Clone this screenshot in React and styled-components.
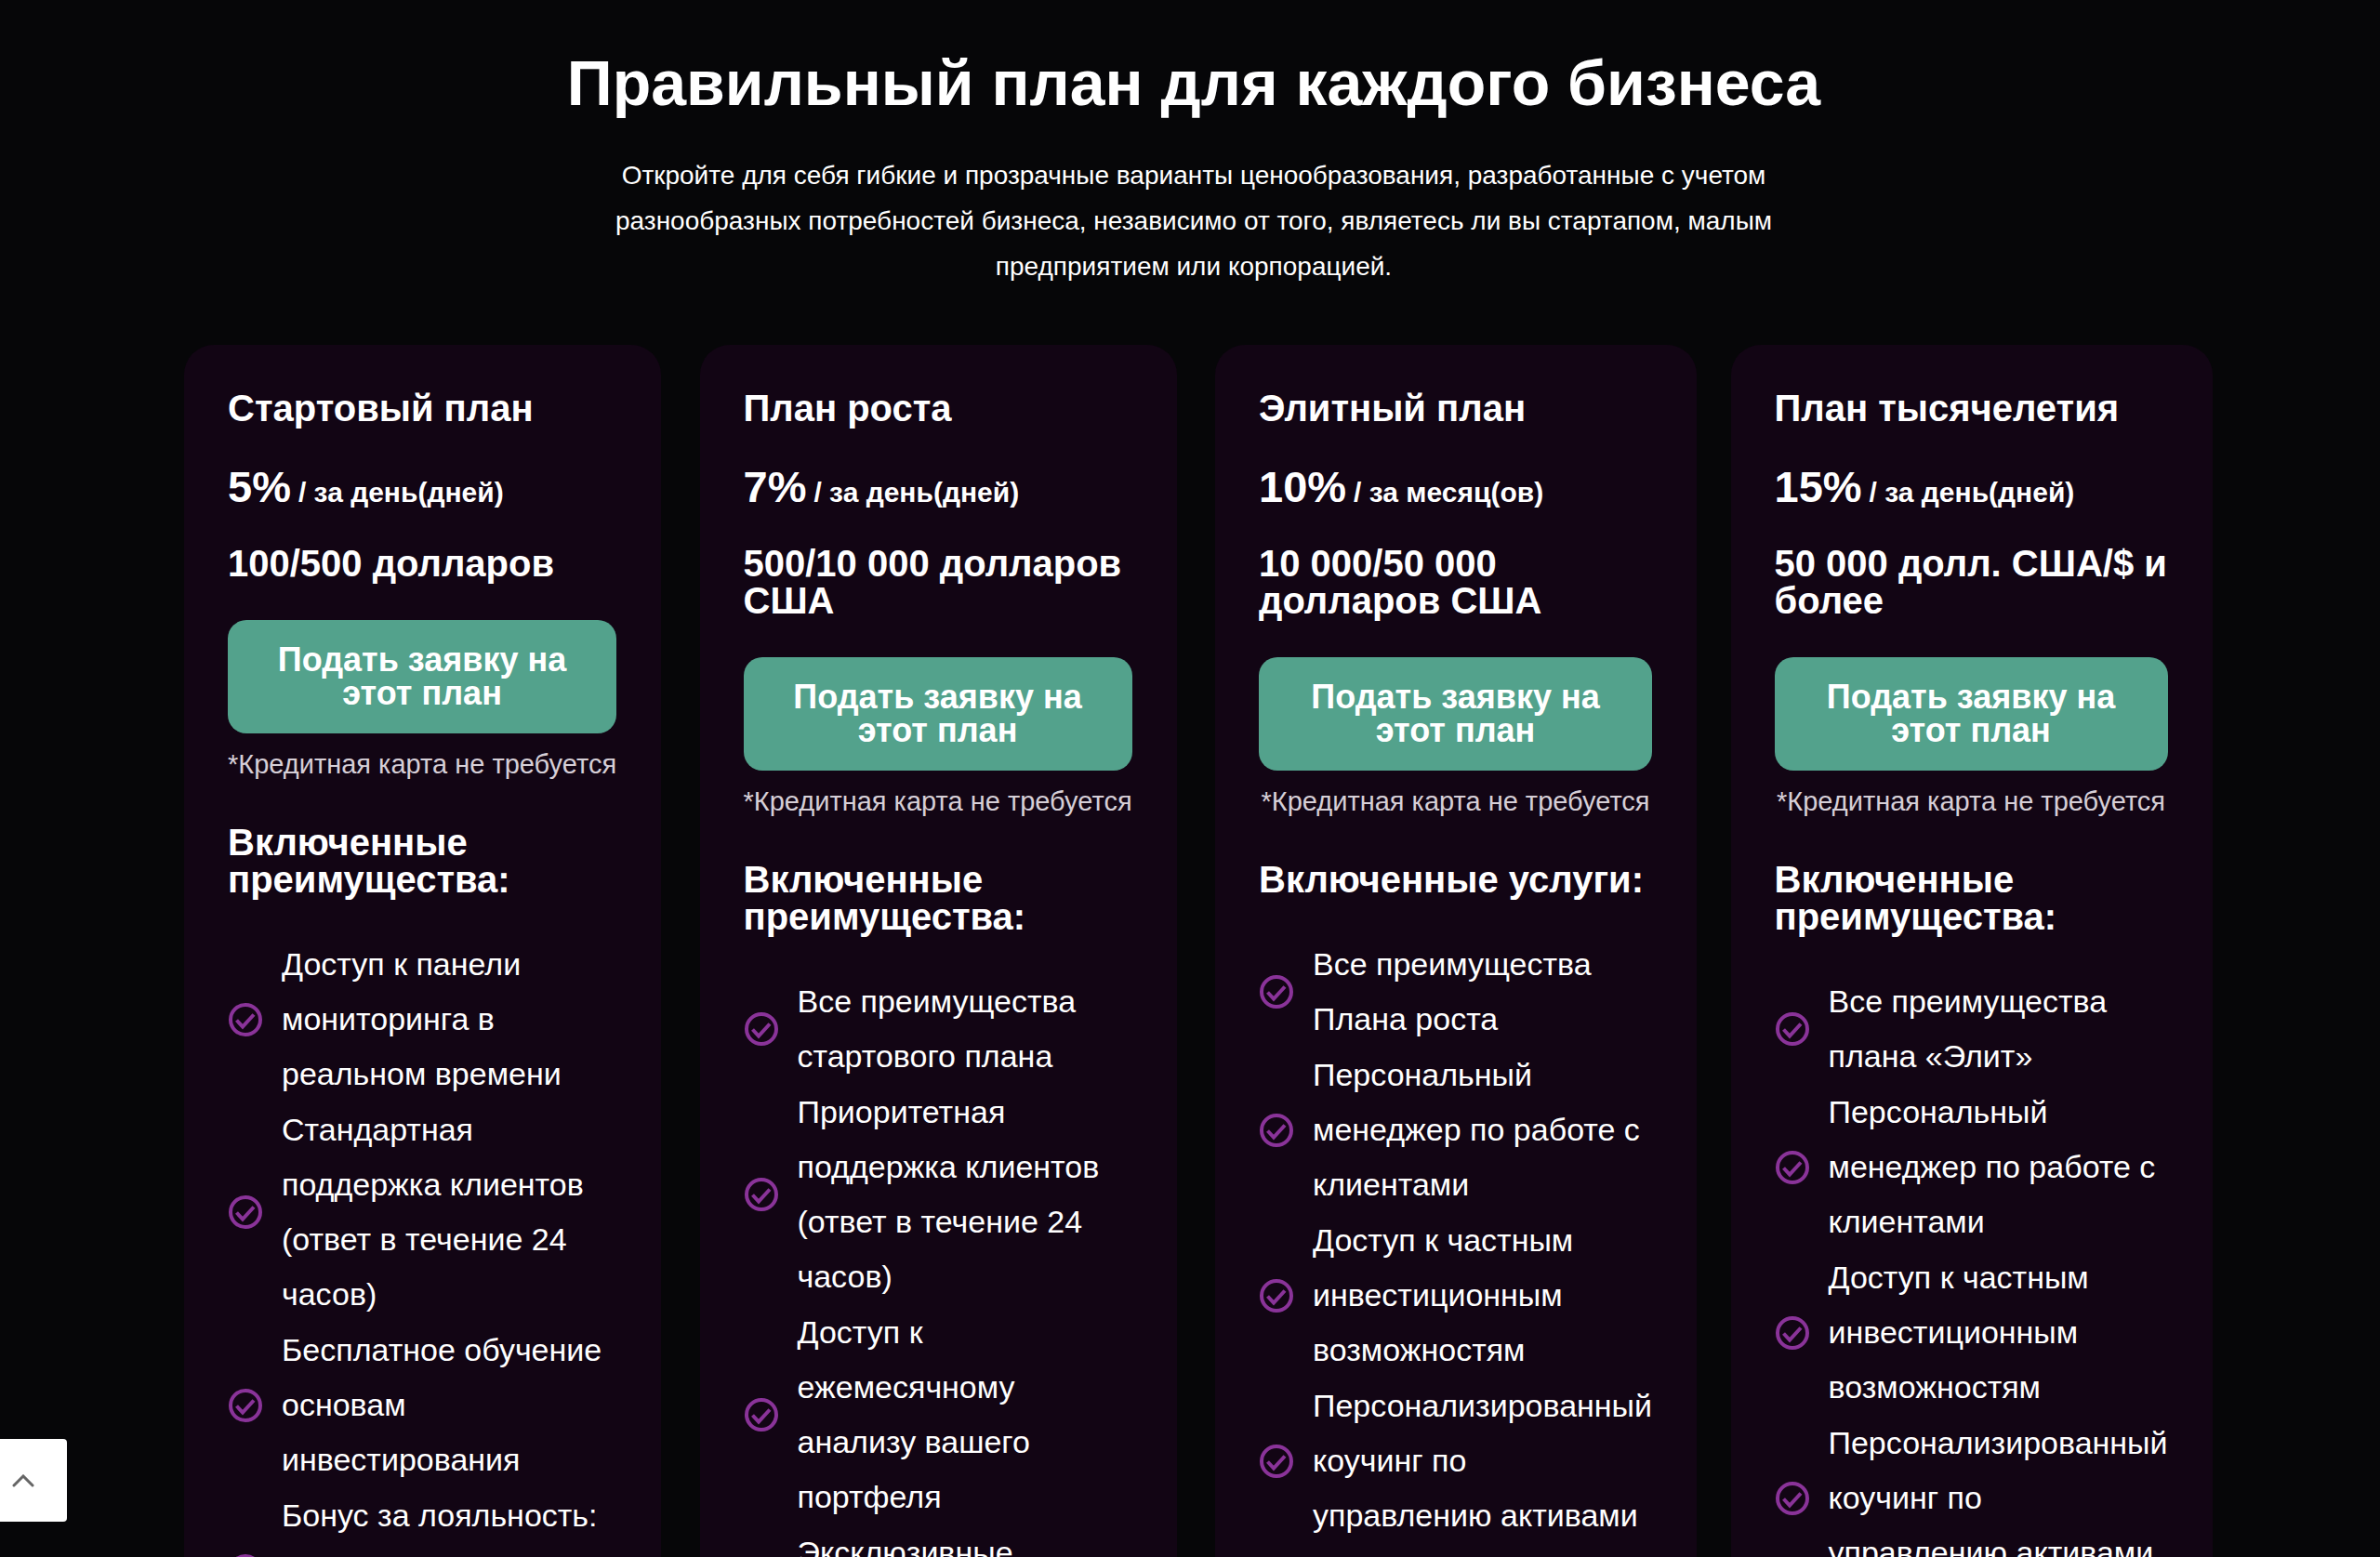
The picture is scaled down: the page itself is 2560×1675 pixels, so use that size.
import styled, { createGlobalStyle } from "styled-components";

const perks = {
  manager: "Персональный менеджер по работе с клиентами",
  private: "Доступ к частным инвестиционным возможностям",
  coaching: "Персонализированный коучинг по управлению активами",
};

const plans = [
  {
    name: "Стартовый план",
    rate: "5%",
    period: "за день(дней)",
    amount: "100/500 долларов",
    perksTitle: "Включенные преимущества:",
    perks: [
      "Доступ к панели мониторинга в реальном времени",
      "Стандартная поддержка клиентов (ответ в течение 24 часов)",
      "Бесплатное обучение основам инвестирования",
      "Бонус за лояльность: 5% за повторные инвестиции",
    ],
  },
  {
    name: "План роста",
    rate: "7%",
    period: "за день(дней)",
    amount: "500/10 000 долларов США",
    perksTitle: "Включенные преимущества:",
    perks: [
      "Все преимущества стартового плана",
      "Приоритетная поддержка клиентов (ответ в течение 24 часов)",
      "Доступ к ежемесячному анализу вашего портфеля",
      "Эксклюзивные вебинары",
    ],
  },
  {
    name: "Элитный план",
    rate: "10%",
    period: "за месяц(ов)",
    amount: "10 000/50 000 долларов США",
    perksTitle: "Включенные услуги:",
    perks: [
      "Все преимущества Плана роста",
      perks.manager,
      perks.private,
      perks.coaching,
    ],
  },
  {
    name: "План тысячелетия",
    rate: "15%",
    period: "за день(дней)",
    amount: "50 000 долл. США/$ и более",
    perksTitle: "Включенные преимущества:",
    perks: [
      "Все преимущества плана «Элит»",
      perks.manager,
      perks.private,
      perks.coaching,
    ],
  },
];

const CheckIcon = () => (
  <Check viewBox="0 0 38 38" aria-hidden="true">
    <circle cx="19" cy="19" r="16" />
    <path d="M9.5 19.5l6.5 7L28 13.5" />
  </Check>
);

const PlanCard = ({ name, rate, period, amount, perksTitle, perks }) => {
  return (
    <Card>
      <PlanName>{name}</PlanName>
      <Rate>
        {rate} <Period>/ {period}</Period>
      </Rate>
      <Amount>{amount}</Amount>
      <Apply>Подать заявку на этот план</Apply>
      <Note>*Кредитная карта не требуется</Note>
      <PerksTitle>{perksTitle}</PerksTitle>
      <Perks>
        {perks.map((perk) => (
          <Perk key={perk}>
            <CheckIcon />
            <PerkText>{perk}</PerkText>
          </Perk>
        ))}
      </Perks>
    </Card>
  );
};

const App = () => {
  return (
    <>
      <GlobalStyle />
      <Section>
        <Title>Правильный план для каждого бизнеса</Title>
        <Lead>
          Откройте для себя гибкие и прозрачные варианты ценообразования,
          разработанные с учетом разнообразных потребностей бизнеса, независимо
          от того, являетесь ли вы стартапом, малым предприятием или
          корпорацией.
        </Lead>
        <Plans>
          {plans.map((plan) => (
            <PlanCard key={plan.name} {...plan} />
          ))}
        </Plans>
      </Section>
      <ScrollTop aria-label="Наверх">
        <Chevron viewBox="0 0 24 14" aria-hidden="true">
          <path d="M2 12L12 2l10 10" />
        </Chevron>
      </ScrollTop>
    </>
  );
};

const GlobalStyle = createGlobalStyle`
  * {
    box-sizing: border-box;
  }

  body {
    margin: 0;
    background: #060608;
    color: #fff;
    font-family: "Liberation Sans", Arial, sans-serif;
  }
`;

const Section = styled.section`
  height: 100vh;
  overflow: hidden;
  padding: 49px 190px 0 198px;
`;

const Title = styled.h1`
  margin: 0;
  font-size: 68px;
  line-height: 80px;
  text-align: center;
`;

const Lead = styled.p`
  max-width: 1280px;
  margin: 35px auto 0;
  font-size: 28px;
  line-height: 49px;
  text-align: center;
`;

const Plans = styled.div`
  display: grid;
  grid-template-columns: repeat(4, minmax(0, 1fr));
  gap: 46px;
  margin-top: 60px;
`;

const Card = styled.article`
  display: flex;
  flex-direction: column;
  min-width: min-content;
  padding: 48px 48px 60px 47px;
  border-radius: 32px;
  background: #120514;
`;

const PlanName = styled.h2`
  margin: 0;
  font-size: 40px;
  line-height: 40px;
`;

const Rate = styled.p`
  display: flex;
  align-items: baseline;
  gap: 8px;
  margin: 37px 0 0;
  font-size: 47px;
  font-weight: 700;
  line-height: 56px;
`;

const Period = styled.span`
  font-size: 30px;
`;

const Amount = styled.h3`
  margin: 28px 0 0;
  font-size: 40px;
  line-height: 40px;
`;

const Apply = styled.button`
  margin-top: 41px;
  padding: 25px 40px;
  border: none;
  border-radius: 20px;
  background: #53a28c;
  color: #fff;
  font-family: inherit;
  font-size: 36px;
  font-weight: 700;
  line-height: 36px;
  cursor: pointer;
`;

const Note = styled.p`
  margin: 13px 0 0;
  color: #d6cfd7;
  font-size: 29px;
  line-height: 40px;
  text-align: center;
  white-space: nowrap;
`;

const PerksTitle = styled.h3`
  margin: 44px 0 0;
  font-size: 40px;
  line-height: 40px;
`;

const Perks = styled.ul`
  display: grid;
  gap: 1px;
  margin: 42px 0 0;
  padding: 0;
  list-style: none;
`;

const Perk = styled.li`
  display: flex;
  align-items: center;
  gap: 20px;
`;

const Check = styled.svg`
  flex: none;
  width: 38px;
  height: 38px;
  fill: none;
  stroke: #8a3399;
  stroke-width: 4;
`;

const PerkText = styled.span`
  font-size: 34px;
  line-height: 59px;
`;

const ScrollTop = styled.button`
  position: fixed;
  bottom: 38px;
  left: 0;
  display: flex;
  align-items: center;
  width: 72px;
  height: 89px;
  padding: 0 0 0 13px;
  border: none;
  border-radius: 0 4px 4px 0;
  background: #fff;
  cursor: pointer;
`;

const Chevron = styled.svg`
  width: 24px;
  height: 14px;
  fill: none;
  stroke: #666;
  stroke-width: 3;
  stroke-linecap: round;
`;

export default App;
